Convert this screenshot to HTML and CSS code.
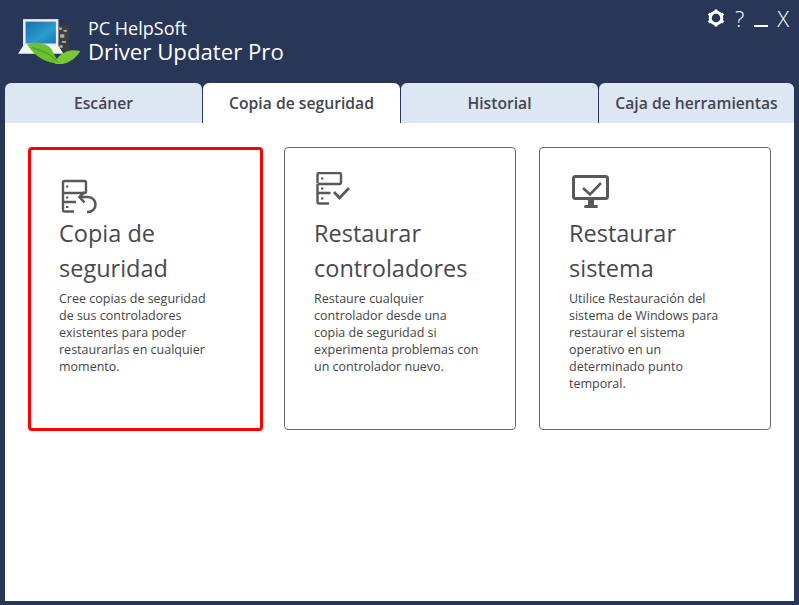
FILE: index.html
```html
<!DOCTYPE html>
<html lang="es">
<head>
<meta charset="utf-8">
<title>PC HelpSoft Driver Updater Pro</title>
<link rel="stylesheet" href="styles.css">
</head>
<body>
<div class="window">
  <header class="header">
    <div class="brand">
      <svg class="logo" width="64" height="46" viewBox="0 0 76 54">
        <defs>
          <linearGradient id="scr" x1="0" y1="0" x2="1" y2="1"><stop offset="0" stop-color="#1b6fa6"/><stop offset=".6" stop-color="#2a9bd0"/><stop offset="1" stop-color="#1a78ae"/></linearGradient>
        </defs>
        <rect x="47" y="8" width="14" height="30" fill="#3b3f3f"/>
        <path d="M49 11h3v3h-3zM54 14h4v2h-4zM50 19h5v4h-5zM52 27h5v2h-5zM49 32h4v3h-4z" fill="#a9b0ad"/>
        <rect x="6" y="1" width="42" height="32" fill="#e9ecee"/>
        <rect x="9" y="4" width="36" height="26" fill="url(#scr)"/>
        <path d="M6 33h42l6 9H0z" fill="#f1f3f4"/>
        <path d="M11 31c10-4 24-2 29 6 3 5 5 12 12 17-16 1-33-8-41-23z" fill="#6cbf2e"/>
        <path d="M44 54c2-12 17-19 30-15-5 9-17 18-30 15z" fill="#79c832"/>
        <path d="M17 35c12 3 24 9 31 18" stroke="#3f8f1c" stroke-width="1" fill="none"/>
      </svg>
      <div class="brand-text">
        <div class="brand-top">PC HelpSoft</div>
        <div class="brand-main">Driver Updater Pro</div>
      </div>
    </div>
    <div class="controls">
      <svg class="gear" width="18" height="18" viewBox="0 0 18 18">
        <circle cx="9" cy="9" r="5.8" fill="none" stroke="#fff" stroke-width="3"/>
        <path d="M9 9V.5M9 9v8.500M9 9l7.400-4.250M9 9l-7.400 4.250M9 9l7.400 4.250M9 9L1.600 4.750" stroke="#fff" stroke-width="3" stroke-dasharray="0 6 3 9"/>
      </svg>
      <span class="ctl q">?</span>
      <span class="min"></span>
      <span class="ctl x">X</span>
    </div>
  </header>
  <nav class="tabs">
    <div class="tab">Escáner</div>
    <div class="tab active">Copia de seguridad</div>
    <div class="tab">Historial</div>
    <div class="tab">Caja de herramientas</div>
  </nav>
  <main class="content">
    <section class="card selected">
      <svg class="icon" width="42" height="42" viewBox="0 0 42 42" fill="none" stroke="#595959" stroke-width="2.400">
        <path d="M4 20V10.500A1.500 1.500 0 0 1 5.500 9h20A1.500 1.500 0 0 1 27 10.500V19.500A1.500 1.500 0 0 1 25.500 21H4M4 20V30M4 30h13M4 30v8A1.500 1.500 0 0 0 5.500 39.500H15"/>
        <path d="M21 25h8a7.500 7.500 0 0 1 0 15h-1" stroke-width="2.600"/>
        <path d="M25.500 20L20.500 25l5 5.500" stroke-width="2.600"/>
        <path d="M7 14.500h2.400M7 25.500h2.400M7 35h2.400" stroke-width="2"/>
      </svg>
      <h2 class="title">Copia de seguridad</h2>
      <p class="desc">Cree copias de seguridad de sus controladores existentes para poder restaurarlas en cualquier momento.</p>
    </section>
    <section class="card">
      <svg class="icon" width="42" height="42" viewBox="0 0 42 42" fill="none" stroke="#595959" stroke-width="2.400">
        <path d="M3.500 11V2.500A1.500 1.500 0 0 1 5 1h20.500A1.500 1.500 0 0 1 27 2.500V10.500A1.500 1.500 0 0 1 25.500 12H3.500M3.500 12V21M3.500 21h13M3.500 21v9A1.500 1.500 0 0 0 5 31.500H15"/>
        <path d="M20 20l5.500 6 9.500-10" stroke-width="2.700"/>
        <path d="M7 6.500h2.400M7 16.500h2.400M7 26.500h2.400" stroke-width="2"/>
      </svg>
      <h2 class="title">Restaurar controladores</h2>
      <p class="desc">Restaure cualquier controlador desde una copia de seguridad si experimenta problemas con un controlador nuevo.</p>
    </section>
    <section class="card">
      <svg class="icon" width="42" height="42" viewBox="0 0 42 42" fill="none" stroke="#595959" stroke-width="3">
        <rect x="4.500" y="4.500" width="34" height="22" rx="2"/>
        <path d="M14 16l7 6.500L32 11" stroke-width="2.600"/>
        <path d="M19 27h6v6h-6z" fill="#595959" stroke="none"/>
        <path d="M16.500 34.500h11" stroke-width="3" stroke-linecap="round"/>
      </svg>
      <h2 class="title">Restaurar sistema</h2>
      <p class="desc">Utilice Restauración del sistema de Windows para restaurar el sistema operativo en un determinado punto temporal.</p>
    </section>
  </main>
</div>
</body>
</html>
```
FILE: styles.css
```css
* { box-sizing: border-box; }
html, body { margin: 0; padding: 0; height: 100%; }
body { font-family: "Open Sans", "Noto Sans", sans-serif; background: #283757; overflow: hidden; }
.window { width: 799px; height: 605px; padding: 0 5px 4px; display: flex; flex-direction: column; }
.header { height: 83px; flex: none; display: flex; justify-content: space-between; }
.brand { display: flex; padding: 17px 0 0 13px; }
.logo { flex: none; margin-right: 6px; margin-top: 1px; }
.brand-text { color: #fff; }
.brand-top { font-size: 18px; line-height: 22px; }
.brand-main { font-size: 22.200px; line-height: 25px; }
.controls { display: flex; align-items: flex-start; color: #fff; padding-top: 5px; padding-right: 5px; }
.gear { margin-top: 4px; margin-right: 10px; }
.ctl { font-size: 22px; line-height: 26px; font-weight: 300; }
.q { margin-right: 10px; }
.min { width: 14px; height: 2px; background: #fff; margin-top: 20px; margin-right: 9px; }
.tabs { display: flex; gap: 1px; height: 40px; flex: none; }
.tab { flex: 197px 0 0; border-radius: 6px 6px 0 0; background: #dde7f4; color: #45454d; font-size: 15.700px; font-weight: 600; display: flex; align-items: center; justify-content: center; }
.tab:last-child { flex: 1; }
.tab.active { background: #fff; }
.content { flex: 1; background: #fff; display: flex; gap: 23px; padding: 24px 0 0 24px; align-items: flex-start; }
.card { width: 232px; height: 283px; border: 1px solid #6b6b6b; border-radius: 4px; padding: 24px 20px 0 29px; flex: none; }
.card.selected { width: 235px; height: 284px; margin: 0 -2px 0 -1px; border: 3px solid #f00; padding: 22px 20px 0 28px; }
.icon { display: block; }
.title { margin: 2px 0 0; font-size: 23.500px; line-height: 35px; font-weight: 400; color: #48484f; }
.desc { margin: 4px 0 0; width: 166px; font-size: 12.500px; line-height: 17px; color: #444; }
.selected .desc { width: 160px; }
```
